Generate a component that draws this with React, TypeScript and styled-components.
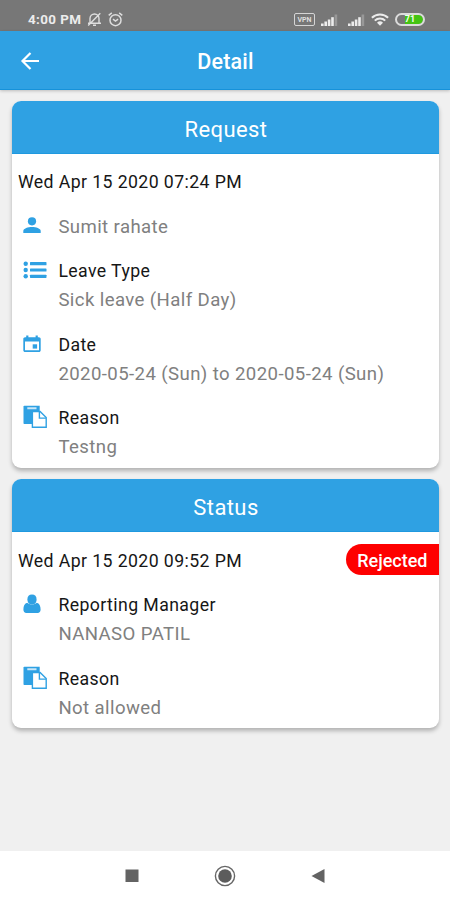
import React from 'react';
import styled, { createGlobalStyle } from 'styled-components';

const BLUE = '#2fa1e3';

const GlobalStyle = createGlobalStyle`
  * { box-sizing: border-box; }
  body { margin: 0; background: #f0f0f0; font-family: Roboto, sans-serif; }
`;

const Screen = styled.div`
  width: 450px;
  height: 900px;
  display: flex;
  flex-direction: column;
  background: #f0f0f0;
  overflow: hidden;
`;

const StatusBar = styled.div`
  height: 31px;
  flex: none;
  padding: 8px 25px 0 28px;
  display: flex;
  justify-content: space-between;
  align-items: center;
  background: #777;
  color: #ececec;
`;

const StatusGroup = styled.div<{ $gap: number }>`
  display: flex;
  align-items: center;
  gap: ${(p) => p.$gap}px;
  svg { display: block; }
`;

const Clock = styled.span`
  font-size: 13.4px;
  font-weight: 700;
  line-height: 16px;
  letter-spacing: 0.4px;
`;

const Vpn = styled.span`
  width: 21px;
  height: 13px;
  border: 1.5px solid #d5d5d5;
  border-radius: 2px;
  display: grid;
  place-items: center;
  font-size: 7px;
  line-height: 8px;
  font-weight: 700;
  color: #dedede;
`;

const Battery = styled.span`
  width: 30px;
  height: 13px;
  border: 2px solid #dcdcdc;
  border-radius: 7px;
  display: grid;
  place-items: center;
  font-size: 9px;
  line-height: 9px;
  font-weight: 700;
  color: #f2fff0;
  background: linear-gradient(to right, #777 8px, #43c412 8px) padding-box;
`;

const TopBar = styled.header`
  height: 59px;
  flex: none;
  padding: 2px 19px 0;
  display: grid;
  grid-template-columns: 22px 1fr 22px;
  align-items: center;
  background: ${BLUE};
  border-bottom: 1px solid #1692da;
  box-shadow: 0 1px 3px rgba(0, 0, 0, 0.22);
  color: #fff;
  svg { display: block; }
`;

const Title = styled.h1`
  margin: 0;
  padding: 2px 0 0 1px;
  text-align: center;
  font-size: 21.5px;
  font-weight: 500;
  line-height: 26px;
  letter-spacing: 0.2px;
`;

const Content = styled.main`
  flex: 1;
  padding: 11px 11px 0 12px;
  display: flex;
  flex-direction: column;
  gap: 11px;
`;

const Card = styled.section`
  background: #fff;
  border-radius: 9px;
  box-shadow: 0 3px 4px rgba(0, 0, 0, 0.26);
  overflow: hidden;
`;

const CardTitle = styled.h2`
  margin: 0;
  height: 53px;
  padding: 4px 0 0 1px;
  display: grid;
  place-items: center;
  background: ${BLUE};
  border-bottom: 1px solid #1f99df;
  color: #fff;
  font-size: 22px;
  font-weight: 400;
  letter-spacing: 0.4px;
`;

const CardBody = styled.div<{ $bottom: number }>`
  padding: 14.4px 0 ${(p) => p.$bottom}px 6px;
  display: flex;
  flex-direction: column;
  gap: 15.4px;
`;

const DateRow = styled.div`
  height: 29px;
  display: flex;
  align-items: center;
  justify-content: space-between;
`;

const Line = styled.div<{ $muted?: boolean }>`
  height: 29px;
  font-size: ${(p) => (p.$muted ? 18.6 : 17.7)}px;
  line-height: 29px;
  white-space: nowrap;
  letter-spacing: 0.4px;
  color: ${(p) => (p.$muted ? '#808080' : '#161616')};
`;

const Entry = styled.div`
  display: grid;
  grid-template-columns: 40.4px 1fr;
`;

const IconCell = styled.div`
  height: 26px;
  padding-left: 5px;
  display: flex;
  align-items: center;
  svg { display: block; }
`;

const Badge = styled.span`
  width: 93px;
  height: 31px;
  margin-top: -3px;
  padding: 1px 11.5px 0 0;
  border-radius: 16px 0 0 16px;
  background: #fe0000;
  color: #fff;
  font-size: 18px;
  font-weight: 500;
  line-height: 31px;
  text-align: right;
`;

const NavBar = styled.nav`
  height: 49px;
  flex: none;
  display: flex;
  align-items: center;
  justify-content: space-between;
  padding: 0 125px 0 125px;
  background: #fff;
  svg { display: block; }
`;

const MutedBell = () => (
  <svg width="15" height="15" viewBox="0 0 15 15" fill="none" stroke="#dedede" strokeWidth="1.4">
    <path d="M3 11V6.5a4.5 4.5 0 0 1 9 0V11M1 11.2h13M6 13.3h3M13.3 1.2 1.2 13.5" />
  </svg>
);

const Alarm = () => (
  <svg width="15" height="15" viewBox="0 0 15 15" fill="none" stroke="#dedede" strokeWidth="1.5">
    <circle cx="7.5" cy="8.2" r="5.5" />
    <path d="M.7 3.3 3.8.9M14.3 3.3 11.2.9M5 7.2l2.5 1.8 2.6-1.8" />
  </svg>
);

const Signal = ({ bars }: { bars: number }) => (
  <svg width="17" height="12" viewBox="0 0 17 12">
    {[2.5, 4.5, 6.5, 8.8, 11.5].map((h, i) => (
      <rect key={h} x={i * 3.4} y={12 - h} width="2.6" height={h} fill={i < bars ? '#ececec' : '#989898'} />
    ))}
  </svg>
);

const SignalPair = styled.span`
  display: flex;
  gap: 10px;
`;

const Wifi = () => (
  <svg width="18" height="13" viewBox="0 0 18 13" fill="none" stroke="#ececec" strokeWidth="2">
    <path d="M.9 4.7a11.6 11.6 0 0 1 16.2 0M3.8 7.6a7.5 7.5 0 0 1 10.4 0" />
    <path d="M9 12.8 6 9.8a4.3 4.3 0 0 1 6 0z" fill="#ececec" stroke="none" />
  </svg>
);

const BackArrow = () => (
  <svg width="22" height="20" viewBox="0 0 22 20" fill="none" stroke="#fff" strokeWidth="2.2">
    <path d="M20 10H3.5M11.5 2 3.5 10l8 8" />
  </svg>
);

const Person = () => (
  <svg width="18" height="17" viewBox="0 0 18 17" fill={BLUE}>
    <circle cx="9" cy="4.3" r="4.1" />
    <path d="M.3 16v-2C.3 11.5 5 10 9 10s8.7 1.5 8.7 4v2z" />
  </svg>
);

const List = () => (
  <svg width="24" height="18" viewBox="0 0 24 18" fill={BLUE}>
    {[2.7, 9, 15.3].map((y) => (
      <g key={y}>
        <circle cx="2.7" cy={y} r="2.2" />
        <rect x="7" y={y - 1.6} width="16.5" height="3.2" rx=".6" />
      </g>
    ))}
  </svg>
);

const Calendar = () => (
  <svg width="18" height="18" viewBox="0 0 18 18">
    <path
      fillRule="evenodd"
      fill={BLUE}
      d="M3.2.5h2.2v1.7h7.2V.5h2.2v1.7h1.1c1 0 1.8.8 1.8 1.8v11.2c0 1-.8 1.8-1.8 1.8H2.1c-1 0-1.8-.8-1.8-1.8V4c0-1 .8-1.8 1.8-1.8h1.1zM2 6.5v8.8h14V6.5z"
    />
    <rect x="9.7" y="9.3" width="4.4" height="4.3" fill={BLUE} />
  </svg>
);

const Paste = () => (
  <svg width="24" height="23" viewBox="0 0 24 23">
    <path d="M1.3.8h15.4V19H1.3q-.8 0-.8-.8V1.6q0-.8.8-.8z" fill={BLUE} />
    <path d="M4.3 2.3h9.2v1.9H4.3z" fill="#c9e7f9" />
    <path d="M9.4 6.5h7.7l6.1 6.1v9.6H9.4z" fill="#fff" stroke={BLUE} strokeWidth="1.4" />
    <path d="M16.4 6.8v6.3h6.5" fill="none" stroke={BLUE} strokeWidth="1.4" />
  </svg>
);

const Manager = () => (
  <svg width="18" height="20" viewBox="0 0 18 20" fill={BLUE}>
    <path d="M9 .6c3 0 4.6 2 4.6 4.8S11.8 10.6 9 10.6 4.4 8.2 4.4 5.4 6 .6 9 .6z" />
    <path d="M4.2 8.7C1.7 9.2.4 11.7.4 15.5c0 2 1.2 3.5 2.9 3.5h11.4c1.7 0 2.9-1.5 2.9-3.5 0-3.8-1.3-6.3-3.8-6.8-2.6 2.4-7 2.4-9.6 0z" />
  </svg>
);

interface FieldProps {
  icon: React.ReactNode;
  label?: string;
  value: string;
}

const Field = ({ icon, label, value }: FieldProps) => (
  <Entry>
    <IconCell>{icon}</IconCell>
    <div>
      {label && <Line>{label}</Line>}
      <Line $muted>{value}</Line>
    </div>
  </Entry>
);

export default function App() {
  return (
    <Screen>
      <GlobalStyle />
      <StatusBar>
        <StatusGroup $gap={6}>
          <Clock>4:00 PM</Clock>
          <MutedBell />
          <Alarm />
        </StatusGroup>
        <StatusGroup $gap={6}>
          <Vpn>VPN</Vpn>
          <SignalPair>
            <Signal bars={4} />
            <Signal bars={4} />
          </SignalPair>
          <Wifi />
          <Battery>71</Battery>
        </StatusGroup>
      </StatusBar>
      <TopBar>
        <BackArrow />
        <Title>Detail</Title>
      </TopBar>
      <Content>
        <Card>
          <CardTitle>Request</CardTitle>
          <CardBody $bottom={6.5}>
            <DateRow>
              <Line>Wed Apr 15 2020 07:24 PM</Line>
            </DateRow>
            <Field icon={<Person />} value="Sumit rahate" />
            <Field icon={<List />} label="Leave Type" value="Sick leave (Half Day)" />
            <Field icon={<Calendar />} label="Date" value="2020-05-24 (Sun) to 2020-05-24 (Sun)" />
            <Field icon={<Paste />} label="Reason" value="Testng" />
          </CardBody>
        </Card>
        <Card>
          <CardTitle>Status</CardTitle>
          <CardBody $bottom={5.5}>
            <DateRow>
              <Line>Wed Apr 15 2020 09:52 PM</Line>
              <Badge>Rejected</Badge>
            </DateRow>
            <Field icon={<Manager />} label="Reporting Manager" value="NANASO PATIL" />
            <Field icon={<Paste />} label="Reason" value="Not allowed" />
          </CardBody>
        </Card>
      </Content>
      <NavBar>
        <svg width="14" height="14" viewBox="0 0 14 14"><rect x=".5" y=".5" width="13" height="12.5" fill="#636363" /></svg>
        <svg width="22" height="22" viewBox="0 0 22 22">
          <circle cx="11" cy="11" r="9.6" fill="none" stroke="#666" strokeWidth="1.4" />
          <circle cx="11" cy="11" r="6.8" fill="#5c5c5c" />
        </svg>
        <svg width="14" height="16" viewBox="0 0 14 16"><path d="M13.5 1v14L.5 8z" fill="#636363" /></svg>
      </NavBar>
    </Screen>
  );
}
